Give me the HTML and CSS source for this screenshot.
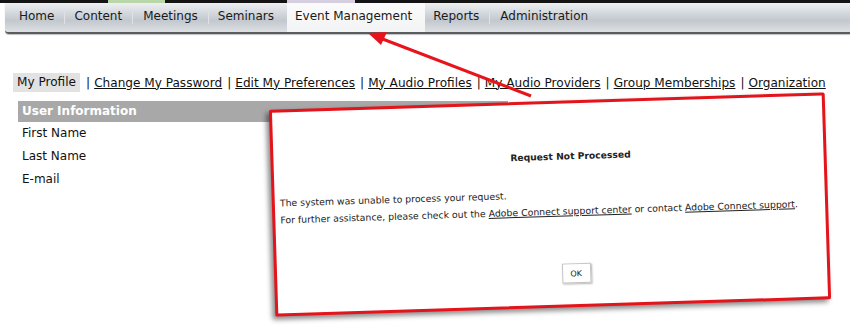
FILE: index.html
```html
<!DOCTYPE html>
<html>
<head>
<meta charset="utf-8">
<link rel="stylesheet" href="styles.css">
</head>
<body>
<div class="topstrip"><span class="seg seg-green"></span><span class="seg seg-lav"></span></div>
<nav class="nav">
  <a class="nav-item">Home</a>
  <a class="nav-item">Content</a>
  <a class="nav-item">Meetings</a>
  <a class="nav-item">Seminars</a>
  <a class="nav-item active">Event Management</a>
  <a class="nav-item">Reports</a>
  <a class="nav-item">Administration</a>
</nav>
<div class="subnav">
  <span class="current">My Profile</span>
  <span class="sep">|</span><a class="link">Change My Password</a>
  <span class="sep">|</span><a class="link">Edit My Preferences</a>
  <span class="sep">|</span><a class="link">My Audio Profiles</a>
  <span class="sep">|</span><a class="link">My Audio Providers</a>
  <span class="sep">|</span><a class="link">Group Memberships</a>
  <span class="sep">|</span><a class="link">Organization</a>
</div>
<section class="info">
  <div class="info-head">User Information</div>
  <div class="info-row">First Name</div>
  <div class="info-row">Last Name</div>
  <div class="info-row">E-mail</div>
</section>

<svg class="arrow" width="850" height="330" viewBox="0 0 850 330">
  <line x1="531" y1="96" x2="380" y2="38" stroke="#e8141c" stroke-width="3"/>
  <polygon points="368,33 387,32 381,45" fill="#e8141c"/>
</svg>

<div class="dialog">
  <div class="dlg-title">Request Not Processed</div>
  <p class="dlg-text first">The system was unable to process your request.</p>
  <p class="dlg-text">For further assistance, please check out the <a class="dlg-link">Adobe Connect support center</a> or contact <a class="dlg-link">Adobe Connect support</a>.</p>
  <div class="dlg-actions"><button class="ok">OK</button></div>
</div>
</body>
</html>
```
FILE: styles.css
```css
html, body {
  margin: 0;
  padding: 0;
  background: #fff;
  width: 850px;
  height: 330px;
  overflow: hidden;
  position: relative;
  font-family: "DejaVu Sans", Verdana, sans-serif;
  color: #111;
}
.topstrip {
  height: 3px;
  background: #141414;
  display: flex;
}
.seg { display: block; height: 3px; }
.seg-green { margin-left: 108px; width: 57px; background: #b9d6a8; }
.seg-lav { margin-left: 122px; width: 68px; background: #d6cfe0; }

.nav {
  display: flex;
  align-items: stretch;
  margin-left: 5px;
  height: 29px;
  padding-left: 4px;
  background: linear-gradient(#eef0f2 0%, #d3d8dd 35%, #c2c8ce 60%, #dde0e3 100%);
  border-bottom: 2px solid #5a5d60;
  border-radius: 0 0 0 4px;
  box-shadow: 0 1px 1px rgba(0,0,0,0.25);
}
.nav-item {
  display: flex;
  align-items: center;
  padding: 0 10px 3px;
  font-size: 12px;
  color: #1a1a1a;
  position: relative;
}
.nav-item + .nav-item::before {
  content: "";
  position: absolute;
  left: 0;
  top: 9px;
  height: 12px;
  width: 1px;
  background: #dfe3e7;
}
.nav-item:nth-child(3) { padding-left: 11px; }
.nav-item:nth-child(4) { padding-right: 13px; }
.nav-item.active {
  background: linear-gradient(#fbfbfb, #f2f3f4);
  padding: 0 13px 3px 8px;
}
.nav-item.active::before, .nav-item.active + .nav-item::before { display: none; }
.nav-item.active + .nav-item { padding-left: 8px; }
.nav-item:last-child { padding-left: 11px; }

.subnav {
  display: flex;
  align-items: center;
  margin: 39px 0 0 13px;
  font-size: 12.1px;
  height: 19px;
}
.current {
  background: #e2e2e2;
  padding: 2px 4px 3px 4px;
}
.sep { margin: 0 4px 0 5px; }
.current + .sep { margin-left: 6px; }
.link { text-decoration: underline; color: #111; }

.info {
  margin: 9px 0 0 18px;
  width: 490px;
}
.info-head {
  background: #a8a8a8;
  color: #fff;
  font-weight: bold;
  font-size: 12px;
  height: 21px;
  line-height: 21px;
  padding-left: 4px;
}
.info-row {
  font-size: 12px;
  padding-left: 4px;
  height: 23px;
  line-height: 23px;
}

.arrow {
  position: absolute;
  left: 0;
  top: 0;
  pointer-events: none;
}

.dialog {
  position: absolute;
  left: 272px;
  top: 101px;
  width: 550px;
  height: 201px;
  background: #fff;
  border: 3px solid #e3141b;
  border-radius: 2px;
  box-shadow: -3px 3px 5px rgba(0,0,0,0.45);
  transform: rotate(-1.8deg);
  font-size: 9.35px;
  color: #222;
}
.dlg-title {
  font-weight: bold;
  text-align: center;
  padding-left: 44px;
  margin-top: 47px;
  font-size: 9.2px;
}
.dlg-text {
  margin: 0 0 0 5px;
  line-height: 17px;
}
.dlg-text.first { margin-top: 24px; }
.dlg-link { text-decoration: underline; }
.dlg-actions {
  text-align: center;
  padding-left: 48px;
  margin-top: 44px;
}
.ok {
  font-family: "DejaVu Sans", Verdana, sans-serif;
  font-size: 8px;
  width: 29px;
  height: 20px;
  background: #fff;
  border: 1px solid #c4c4c4;
  box-shadow: 1px 1px 2px rgba(0,0,0,0.3);
  color: #222;
  padding: 0;
}
```
